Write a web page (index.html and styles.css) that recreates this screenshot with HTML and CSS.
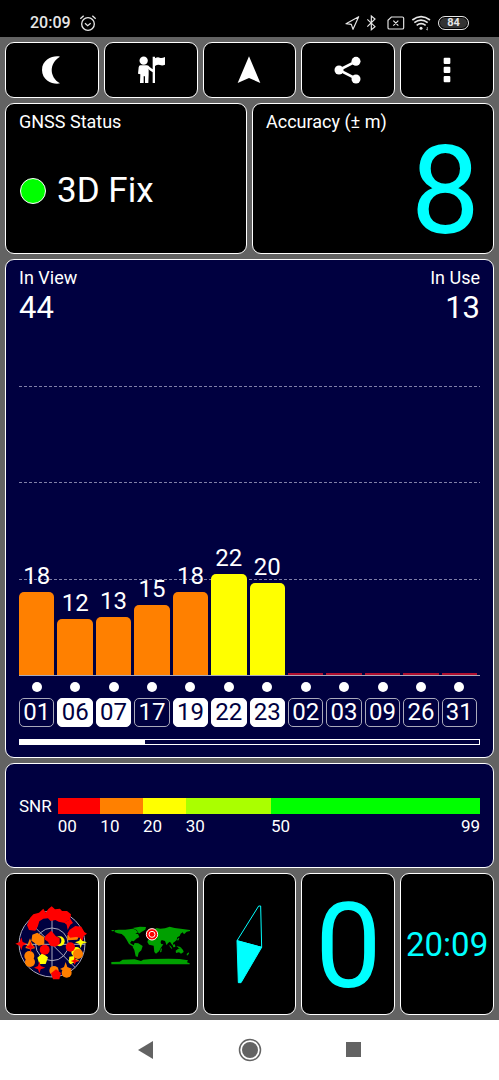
FILE: index.html
```html
<!DOCTYPE html>
<html lang="en">
<head>
<meta charset="utf-8">
<meta name="viewport" content="width=device-width, initial-scale=1">
<title>GPS Status</title>
<link rel="stylesheet" href="styles.css">
</head>
<body>
<header class="status">
  <div class="status-group">
    <time class="status-time">20:09</time>
    <svg width="18" height="18" viewBox="0 0 54 54" fill="none" stroke="#e6e6e6" stroke-width="4" aria-label="Alarm"><circle cx="27" cy="30" r="19"/><path d="M18 28l8 7 9-7M4 14L14 5M50 14L40 5"/></svg>
  </div>
  <div class="status-group status-icons">
    <svg width="94" height="18" viewBox="285 41 282 54" fill="none" stroke="#e6e6e6" stroke-width="3.5" aria-label="Location, Bluetooth, no SIM, Wi-Fi">
      <path d="M329 49L291 70l16 2 5 15z" stroke-linejoin="round"/>
      <path d="M355 57l23 22-11 9V47l11 9-23 23"/>
      <path d="M427 50h33q4 0 4 4v28q0 4-4 4h-39q-4 0-4-4V60zM433 61l15 15M448 61l-15 15"/>
      <path d="M490 59q26-20 53 0M496 67q20-15 40 0M503 75q13-10 27 0" stroke-width="5"/><circle cx="516" cy="84" r="4.500" fill="#e6e6e6" stroke="none"/><path d="M535 80v9M532 86l3 4" stroke-width="2"/>
    </svg>
    <span class="battery">84</span>
  </div>
</header>

<main class="app">
  <nav class="tiles toolbar" aria-label="Tools">
    <button class="panel tile" aria-label="Night mode"><svg width="22" height="30" viewBox="123 165 66 90" fill="#fff"><path d="M180 170C163 165 126 176 126 210s37 45 54 40c-33-20-33-60 0-80z"/></svg></button>
    <button class="panel tile" aria-label="Waypoint"><svg width="30" height="30" viewBox="408 165 90 90" fill="#fff"><circle cx="431" cy="182" r="12.500"/><path d="M421 196h20q5 0 8 5l9 7v-38h7v5q8-5 14-2t16-2v23q-8 4-15 1t-15 3v51h-7v-32l-10-7-2-4v17l-1 26h-10v-20h-4v20h-11l1-26-7-2 2-19q1-6 5-6z"/></svg></button>
    <button class="panel tile" aria-label="Navigate"><svg width="24" height="30" viewBox="0 0 72 90" fill="#fff"><path d="M36 4L70 84 36 69 2 84z"/></svg></button>
    <button class="panel tile" aria-label="Share"><svg width="28" height="30" viewBox="250 165 84 90" fill="#fff"><path d="M316 184L265 210l51 26" fill="none" stroke="#fff" stroke-width="8"/><circle cx="316" cy="184" r="13.500"/><circle cx="265" cy="210" r="13.500"/><circle cx="316" cy="237" r="13.500"/></svg></button>
    <button class="panel tile" aria-label="More"><svg width="8" height="28" viewBox="0 0 24 84" fill="#fff"><rect x="2" y="5" width="20" height="19" rx="3"/><rect x="2" y="32" width="20" height="19" rx="3"/><rect x="2" y="60" width="20" height="19" rx="3"/></svg></button>
  </nav>

  <div class="summary">
    <section class="panel card">
      <h2 class="label">GNSS Status</h2>
      <p class="fix"><span class="lamp"></span>3D Fix</p>
    </section>
    <section class="panel card">
      <h2 class="label">Accuracy (± m)</h2>
      <p class="accuracy">8</p>
    </section>
  </div>

  <section class="panel navy signals">
    <div class="counts">
      <div><h2 class="label">In View</h2><p class="count">44</p></div>
      <div class="right"><h2 class="label">In Use</h2><p class="count">13</p></div>
    </div>
    <div class="chart">
      <div class="gridlines"><i></i><i></i><i></i></div>
      <div class="bars">
        <div class="col"><span class="snr">18</span><div class="bar orange" style="height:28.8%"></div></div>
        <div class="col"><span class="snr">12</span><div class="bar orange" style="height:19.3%"></div></div>
        <div class="col"><span class="snr">13</span><div class="bar orange" style="height:20%"></div></div>
        <div class="col"><span class="snr">15</span><div class="bar orange" style="height:24.1%"></div></div>
        <div class="col"><span class="snr">18</span><div class="bar orange" style="height:28.6%"></div></div>
        <div class="col"><span class="snr">22</span><div class="bar yellow" style="height:35%"></div></div>
        <div class="col"><span class="snr">20</span><div class="bar yellow" style="height:31.7%"></div></div>
        <div class="col"><div class="bar none"></div></div>
        <div class="col"><div class="bar none"></div></div>
        <div class="col"><div class="bar none"></div></div>
        <div class="col"><div class="bar none"></div></div>
        <div class="col"><div class="bar none"></div></div>
      </div>
    </div>
    <ul class="sats">
      <li class="sat"><span class="id">01</span></li>
      <li class="sat"><span class="id used">06</span></li>
      <li class="sat"><span class="id used">07</span></li>
      <li class="sat"><span class="id">17</span></li>
      <li class="sat"><span class="id used">19</span></li>
      <li class="sat"><span class="id used">22</span></li>
      <li class="sat"><span class="id used">23</span></li>
      <li class="sat"><span class="id">02</span></li>
      <li class="sat"><span class="id">03</span></li>
      <li class="sat"><span class="id">09</span></li>
      <li class="sat"><span class="id">26</span></li>
      <li class="sat"><span class="id">31</span></li>
    </ul>
    <div class="track"><div class="thumb" style="width:27.3%"></div></div>
  </section>

  <section class="panel navy scale">
    <h2 class="scale-name">SNR</h2>
    <div class="scale-bar"><i class="red"></i><i class="orange"></i><i class="yellow"></i><i class="lime"></i><i class="green"></i></div>
    <div class="scale-marks"><span>00</span><span>10</span><span>20</span><span>30</span><span class="ends"><span>50</span><span>99</span></span></div>
  </section>

  <nav class="tiles pages" aria-label="Pages">
    <button class="panel tile" aria-label="Sky view">
      <svg width="74" height="77" viewBox="45 107 222 231">
        <g fill="#000040" stroke="#aab" stroke-width="3"><circle cx="156" cy="221" r="99"/><circle cx="156" cy="222" r="49" fill="none"/><path d="M156 122v198M57 222h198M86 152l140 140"/></g>
        <g fill="#ff8000"><path d="M112 187l21 14v21l-17 4-22-15 3-18z"/><path d="M90 204l5 14 10 16-16 2-13-3 7-11z"/><circle cx="88" cy="257" r="15"/><circle cx="90" cy="275" r="15"/><path d="M202 195l15-10 22 8-7 15-30 2z"/></g>
        <g fill="#ff0"><circle cx="229" cy="245" r="15"/><path d="M208 259l14-2 3 8 13 5-13 6-14 6-5-6z"/><path d="M127 249l17 12-7 20h-19l-6-19z"/><path d="M242 199l4 12 15 5-15 5-4 13-4-13-13-5 13-5z"/><circle cx="179" cy="213" r="15"/></g>
        <circle cx="173" cy="211" r="11" fill="#000040"/>
        <g fill="#f00"><path d="M90 143l10-11 17-5 13-12 7 12 8-11 10-8 10 9 15-2 6 7 15 0 12 10-3 16-19 9-15-3-10-5-14 3-8-8-14 1-12 8-5 16-7 12-19-2-6-15z"/><path d="M191 156l13-5 7-6 8 13-8 5-8 16-3-16z"/><path d="M209 178l17-11 18 2 9 16 8 5-10 7-3 15-9-10-10-2-19 2-8-12z"/><path d="M136 197l18-16 13 16 12 7v16l-12 9-16-3-7-12-11-7z"/><circle cx="134" cy="238" r="15"/><circle cx="211" cy="230" r="14"/><path d="M64 201l4 14 13 5-13 6-4 14-5-14-13-6 13-5zM91 213l4 12 11 5-11 4-3 12-4-12-12-5 12-4zM118 273l4 14 14 5-14 5-4 12-4-12-12-5 12-5z"/></g>
        <g fill="#ff8000"><circle cx="234" cy="251" r="15"/><circle cx="162" cy="301" r="14"/><circle cx="200" cy="307" r="15"/><path d="M197 275l5 15 15 6-15 5-5 15-5-15-12-5 12-6z"/></g>
        <g fill="#f00"><path d="M168 297l15 11-5 19h-19l-6-18zM224 260l4 9 11 3-11 3-4 8-4-8-8-3 9-3z"/></g>
      </svg>
    </button>
    <button class="panel tile" aria-label="World map">
      <svg width="82" height="43" viewBox="330 157 246 129">
        <g fill="#00a000"><path d="M334 178l7 0 2 3-7 1zM344 179l12-2 20 0 22-3 9 3 7 8-8 4 8 1 4 9-9 5-8 8-6-2-5 7 6 4 9 5-5 2-13-8-8-14-6-9-8-7-12-2-9-4z"/><path d="M398 172l22-4 18 1-2 8-12 7-7 5-7-11z"/><path d="M404 217l11 1 13 8-4 13-8 7-3 13-6-2-4-19-5-9z"/><path d="M445 199l8-15 7-6 10-6 11 2 14-1 14-5 15 4 18 2 28 4v3l-10 2-8 8-4-6-6 4-3 7-7 4-2 8-6 5-5 4 2 9-6-5-5-8-6 4-4 7-5-13-10-3-5 9-5-9-8-5-6-2-7 2z"/><path d="M444 208l15-5 19 4 6 13 6 1-8 12-5 9-9 7-5-5-2-19-14-3-5-8z"/><path d="M438 181l5-1 2 4-5 1zM482 235l4-2-2 11-4 1zM507 224l4 1 6 8-3 1zM518 223l7-2 1 8-6 1zM529 226l10 2 6 5-9-1zM527 240l8-6 8-3 6 7 2 6-8 5-6-4-9 2zM560 250l6-5 1 4-6 6zM531 207l5-6 2 3-4 6z"/><path d="M334 274l25-1 9-6 36-1 19 5 7-4 23-2 52-1 34 1 25 4-3 6 8 3v3H334z"/></g>
        <circle cx="456" cy="191" r="18" fill="#f00"/><g fill="none" stroke="#fff"><circle cx="456" cy="191" r="17" stroke-width="3"/><circle cx="456" cy="191" r="9" stroke-width="3"/></g>
      </svg>
    </button>
    <button class="panel tile" aria-label="Compass">
      <svg width="29" height="82" viewBox="105 99 87 246" fill="#0ff" stroke="#0ff" stroke-width="3"><path d="M111 212l65-104h6l3 124z" fill="none"/><path d="M111 212l74 20-62 106h-8z"/></svg>
    </button>
    <button class="panel tile speed">0</button>
    <button class="panel tile clock">20:09</button>
  </nav>
</main>

<nav class="system" aria-label="System">
  <button class="sys" aria-label="Back"><svg width="24" height="24" viewBox="0 0 24 24" fill="#636363"><path d="M4 12L19 3v18z"/></svg></button>
  <button class="sys" aria-label="Home"><svg width="24" height="24" viewBox="0 0 24 24" fill="#636363"><circle cx="12" cy="12" r="8"/><circle cx="12" cy="12" r="10.500" fill="none" stroke="#636363" stroke-width="1.500"/></svg></button>
  <button class="sys" aria-label="Recent apps"><svg width="24" height="24" viewBox="0 0 24 24" fill="#636363"><rect x="4" y="4" width="15" height="15"/></svg></button>
</nav>
</body>
</html>
```
FILE: styles.css
```css
* { box-sizing: border-box; }
body {
  margin: 0;
  min-height: 100vh;
  display: flex;
  flex-direction: column;
  background: #636363;
  color: #fff;
  font-family: Roboto, "Liberation Sans", sans-serif;
}
h2, p, ul { margin: 0; padding: 0; font-weight: 400; }
ul { list-style: none; }
button { font: inherit; color: inherit; border: 0; padding: 0; background: none; }
svg { display: block; flex: none; }

.status {
  display: flex;
  justify-content: space-between;
  align-items: center;
  padding: 9px 30px 1px;
  height: 37px;
  background: #000;
  color: #e6e6e6;
}
.status-group { display: flex; align-items: center; gap: 8px; }
.status-icons { gap: 0; }
.status-time { font-size: 16px; font-weight: 500; line-height: 20px; }
.battery {
  width: 31px;
  border: 1px solid #e6e6e6;
  border-radius: 7px;
  background: #333;
  box-shadow: inset 0 0 0 1px #000;
  font-size: 11px;
  font-weight: 700;
  line-height: 12px;
  text-align: center;
}

.app {
  flex: 1;
  display: flex;
  flex-direction: column;
  gap: 5px;
  padding: 5px;
}
.panel {
  border: 1px solid #fff;
  border-radius: 9px;
  background: #000;
}
.navy { background: #000040; }
.label { font-size: 18px; line-height: 22px; }

.tiles { display: grid; grid-template-columns: repeat(5, 1fr); gap: 5px; }
.tile { display: flex; align-items: center; justify-content: center; min-width: 0; }
.toolbar .tile { height: 56px; }
.pages .tile { height: 142px; }

.summary { display: grid; grid-template-columns: 1fr 1fr; gap: 5px; }
.card { padding: 7px 13px 3px; }
.fix { display: flex; align-items: center; gap: 11px; padding-left: 1px; font-size: 35px; line-height: 116px; }
.lamp { width: 26px; height: 26px; border: 1px solid #fff; border-radius: 50%; background: #0f0; }
.accuracy { color: #0ff; font-size: 123px; line-height: 117px; text-align: right; }

.signals { flex: 1; display: flex; flex-direction: column; padding: 7px 13px 12px; }
.counts { display: flex; justify-content: space-between; }
.right { text-align: right; }
.count { font-size: 31px; line-height: 38px; }

.chart { position: relative; flex: 1; min-height: 240px; margin-top: 59px; border-bottom: 1px solid #aab; }
.gridlines { position: absolute; inset: 0; display: grid; grid-template-rows: repeat(3, 1fr); }
.gridlines i {
  background: repeating-linear-gradient(90deg, #8080a8 0 3px, transparent 3px 5px) top / 100% 1px no-repeat;
}
.bars { position: absolute; inset: 0; display: flex; }
.col { flex: 1; display: flex; flex-direction: column; justify-content: flex-end; padding-right: 3px; }
.snr { font-size: 24px; line-height: 28px; text-align: center; margin-bottom: 2px; }
.bar { border-radius: 5px 5px 0 0; flex: none; }
.none { height: 2px; border-radius: 0; background: #b01030; }
.red { background: #f00; }
.orange { background: #ff8000; }
.yellow { background: #ff0; }
.lime { background: #af0; }
.green { background: #0f0; }

.sats { display: flex; padding-top: 6px; }
.sat { flex: 1; display: flex; flex-direction: column; align-items: center; gap: 6px; padding-right: 3px; }
.sat::before { content: ""; width: 10px; height: 10px; border-radius: 50%; background: #fff; }
.id {
  align-self: stretch;
  border: 1px solid #aab;
  border-radius: 5px;
  font-size: 24px;
  line-height: 27px;
  text-align: center;
}
.used { background: #fff; border-color: #fff; color: #000040; }
.track { margin-top: 12px; height: 6px; border: 1px solid #fff; }
.thumb { height: 100%; background: #fff; }

.scale {
  display: grid;
  grid-template-columns: auto 1fr;
  column-gap: 6px;
  row-gap: 2px;
  align-content: start;
  padding: 34px 13px 31px;
  font-size: 17px;
  line-height: 20px;
}
.scale-name { font-size: 17px; line-height: 16px; }
.scale-bar, .scale-marks { display: grid; grid-template-columns: 10fr 10fr 10fr 20fr 49fr; }
.scale-marks { grid-column: 2; }
.ends { display: flex; justify-content: space-between; }

.pages .speed { color: #0ff; font-size: 118px; line-height: 118px; padding-top: 6px; }
.clock { color: #0ff; font-size: 33px; }

.system {
  display: grid;
  grid-template-columns: repeat(3, 104px);
  justify-content: center;
  height: 60px;
  background: #fff;
}
.sys { display: flex; align-items: center; justify-content: center; }
```
